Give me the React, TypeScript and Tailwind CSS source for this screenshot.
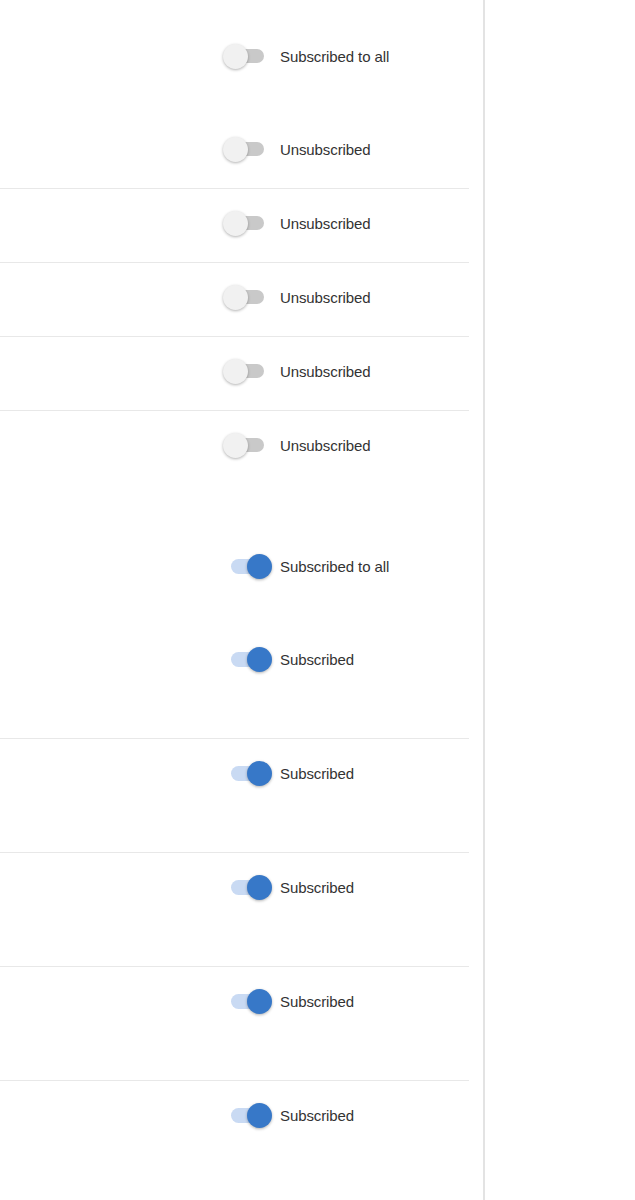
import React from "react";

function Toggle({ on }: { on: boolean }) {
  if (on) {
    return (
      <div className="flex items-center w-[41px] h-[26px] shrink-0">
        <div className="flex items-center justify-end w-[36px] h-[15px] rounded-full bg-[#c9daf3]">
          <div className="shrink-0 w-[25px] h-[25px] -mr-[5px] rounded-full bg-[#3778c8] shadow-[0_1px_3px_rgba(0,0,0,0.3)]" />
        </div>
      </div>
    );
  }
  return (
    <div className="flex items-center w-[41px] h-[26px] shrink-0">
      <div className="flex items-center ml-[5px] w-[36px] h-[14px] rounded-full bg-[#c9c9c9]">
        <div className="shrink-0 w-[25px] h-[25px] -ml-[5px] rounded-full bg-[#f1f1f1] shadow-[0_1px_3px_rgba(0,0,0,0.3)]" />
      </div>
    </div>
  );
}

function Item({ on, label }: { on: boolean; label: string }) {
  return (
    <div className={on ? "flex items-center h-[26px] pl-[231px] gap-[8px]" : "flex items-center h-[26px] pl-[223px] gap-[16px]"}>
      <Toggle on={on} />
      <span className="text-[15px] text-[#333] leading-none tracking-[-0.1px]">{label}</span>
    </div>
  );
}

export default function App() {
  const unsub = [0, 1, 2, 3, 4];
  const sub = [0, 1, 2, 3, 4];
  return (
    <div
      className="flex w-[635px] min-h-[1200px] bg-white"
      style={{ fontFamily: '"Liberation Sans", Arial, sans-serif' }}
    >
      <div className="w-[485px] border-r-2 border-[#e3e3e3] pr-[14px]">
        {/* Section 1 */}
        <div className="pt-[43px] pb-[46px]">
          <Item on={false} label="Subscribed to all" />
        </div>
        {unsub.map((i) => (
          <div
            key={i}
            className={
              i < unsub.length - 1
                ? "pt-[21px] pb-[26px] border-b border-[#e8e8e8]"
                : "pt-[21px] pb-[26px]"
            }
          >
            <Item on={false} label="Unsubscribed" />
          </div>
        ))}
        {/* Section 2 */}
        <div className="pt-[69px] pb-[46px]">
          <Item on={true} label="Subscribed to all" />
        </div>
        {sub.map((i) => (
          <div
            key={i}
            className={
              i < sub.length - 1
                ? "pt-[21px] pb-[66px] border-b border-[#e8e8e8]"
                : "pt-[21px] pb-[66px]"
            }
          >
            <Item on={true} label="Subscribed" />
          </div>
        ))}
      </div>
      <div className="flex-1" />
    </div>
  );
}
